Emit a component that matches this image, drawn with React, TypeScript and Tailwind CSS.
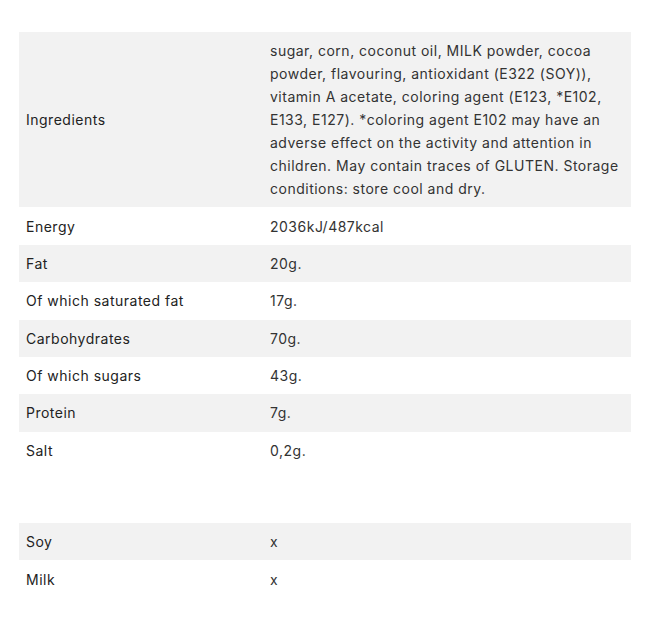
import React from "react";

const rows: [string, string][] = [
  ["Energy", "2036kJ/487kcal"],
  ["Fat", "20g."],
  ["Of which saturated fat", "17g."],
  ["Carbohydrates", "70g."],
  ["Of which sugars", "43g."],
  ["Protein", "7g."],
  ["Salt", "0,2g."],
];

const allergens: [string, string][] = [
  ["Soy", "x"],
  ["Milk", "x"],
];

const ingredients =
  "sugar, corn, coconut oil, MILK powder, cocoa powder, flavouring, antioxidant (E322 (SOY)), vitamin A acetate, coloring agent (E123, *E102, E133, E127). *coloring agent E102 may have an adverse effect on the activity and attention in children. May contain traces of GLUTEN. Storage conditions: store cool and dry.";

function Row({ label, value, gray }: { label: string; value: string; gray: boolean }) {
  return (
    <tr className={gray ? "bg-[#f2f2f2]" : "bg-white"}>
      <td className="w-[244px] px-[7px] py-[7.2px] align-middle text-[#222]">{label}</td>
      <td className="px-[7px] py-[7.2px] align-middle text-[#333]">{value}</td>
    </tr>
  );
}

export default function App() {
  return (
    <div
      className="min-h-[622px] bg-white px-[19px] pt-[32px] text-[14px] leading-[23px] tracking-[0.5px]"
      style={{ fontFamily: 'Inter, sans-serif' }}
    >
      <table className="w-[612px] border-collapse">
        <tbody>
          <tr className="bg-[#f2f2f2]">
            <td className="w-[244px] px-[7px] py-[7.2px] align-middle text-[#222]">Ingredients</td>
            <td className="px-[7px] py-[7.2px] align-middle text-[#333]">{ingredients}</td>
          </tr>
          {rows.map(([l, v], i) => (
            <Row key={l} label={l} value={v} gray={i % 2 === 1} />
          ))}
        </tbody>
      </table>
      <table className="mt-[54px] w-[612px] border-collapse">
        <tbody>
          {allergens.map(([l, v], i) => (
            <Row key={l} label={l} value={v} gray={i % 2 === 0} />
          ))}
        </tbody>
      </table>
    </div>
  );
}
